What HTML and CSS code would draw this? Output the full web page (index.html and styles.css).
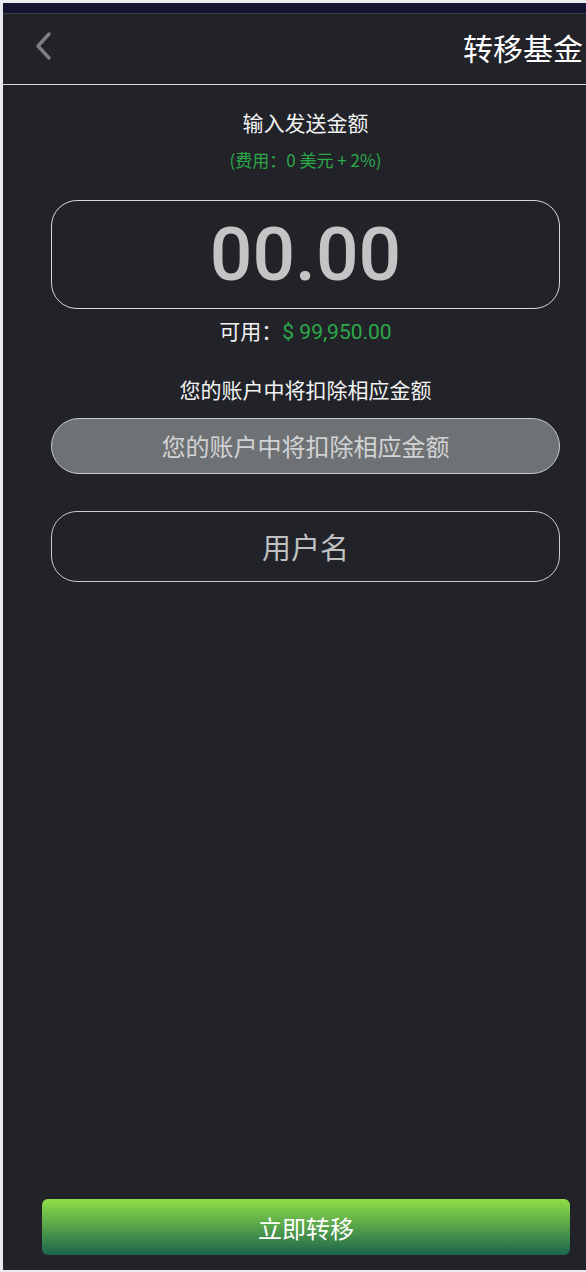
FILE: index.html
```html
<!DOCTYPE html>
<html lang="zh-CN">
<head>
  <meta charset="UTF-8">
  <meta name="viewport" content="width=device-width, initial-scale=1.0">
  <title>转移基金</title>
  <link rel="stylesheet" href="styles.css">
</head>
<body>
  <div class="topbar"></div>
  <div class="app">
    <header class="header">
      <a class="back" href="#">
        <svg width="18" height="28" viewBox="0 0 18 28">
          <path d="M15 2 L4 14 L15 26" fill="none" stroke="#7c7e82" stroke-width="3.4" stroke-linecap="round" stroke-linejoin="round"/>
        </svg>
      </a>
      <h1 class="title">转移基金</h1>
    </header>

    <main class="content">
      <p class="label">输入发送金额</p>
      <p class="fee">(费用：0 美元 + 2%)</p>

      <div class="amount-box">00.00</div>
      <p class="available">可用：<span class="green">$ 99,950.00</span></p>

      <p class="label deduct">您的账户中将扣除相应金额</p>
      <div class="deduct-box">您的账户中将扣除相应金额</div>

      <div class="user-box">用户名</div>
    </main>

    <footer class="footer">
      <button class="submit">立即转移</button>
    </footer>
  </div>
</body>
</html>
```

FILE: styles.css
```css
html {
  background: #e9ebef;
}

body {
  margin: 0;
  padding: 0 0 0 3px;
  height: 1270px;
  overflow: hidden;
  font-family: "Noto Sans CJK SC", "Noto Sans", sans-serif;
  color: #f2f2f2;
}

.topbar {
  height: 10px;
  margin-top: 3px;
  background: #131633;
  border-bottom: 1px solid #3a3d4a;
}

.app {
  width: 605px;
  height: 1256px;
  background: #212329;
  display: flex;
  flex-direction: column;
}

.header {
  height: 70px;
  border-bottom: 1px solid #d6d7da;
  display: flex;
  align-items: center;
  justify-content: space-between;
  padding: 0 25px 0 31px;
}

.back {
  display: flex;
  margin-top: -6px;
}

.title {
  margin: -4px 0 0;
  font-size: 30px;
  font-weight: 400;
  color: #ffffff;
}

.content {
  flex: 1;
  padding: 0 48px;
  text-align: center;
}

p {
  margin: 0;
}

.label {
  margin-top: 22px;
  font-size: 21px;
  line-height: 30px;
}

.fee {
  margin-top: 12px;
  font-size: 17px;
  line-height: 22px;
  color: #2ca94a;
}

.amount-box {
  margin-top: 29px;
  height: 107px;
  border: 1px solid #d6d7da;
  border-radius: 26px;
  font-family: Roboto, "Noto Sans", sans-serif;
  font-size: 75px;
  font-weight: 500;
  line-height: 107px;
  color: #c3c5c4;
}

.available {
  margin-top: 6px;
  font-size: 21px;
  line-height: 30px;
}

.green {
  font-family: Roboto, "Noto Sans", sans-serif;
  color: #2ca94a;
}

.label.deduct {
  margin-top: 27px;
}

.deduct-box {
  margin-top: 14px;
  height: 54px;
  background: #6f7275;
  border: 1px solid #c9cacc;
  border-radius: 28px;
  font-size: 24px;
  line-height: 54px;
  color: #d2d3d4;
}

.user-box {
  margin-top: 37px;
  height: 69px;
  border: 1px solid #c9cacc;
  border-radius: 26px;
  font-size: 29px;
  line-height: 69px;
  color: #bfc0c1;
}

.footer {
  padding: 0 38px 15px 39px;
}

.submit {
  display: block;
  width: 100%;
  height: 56px;
  border: none;
  border-radius: 6px;
  background: linear-gradient(to bottom, #8fdf47, #1c654d);
  font-family: "Noto Sans CJK SC", "Noto Sans", sans-serif;
  font-size: 24px;
  color: #ffffff;
  cursor: pointer;
}
```
